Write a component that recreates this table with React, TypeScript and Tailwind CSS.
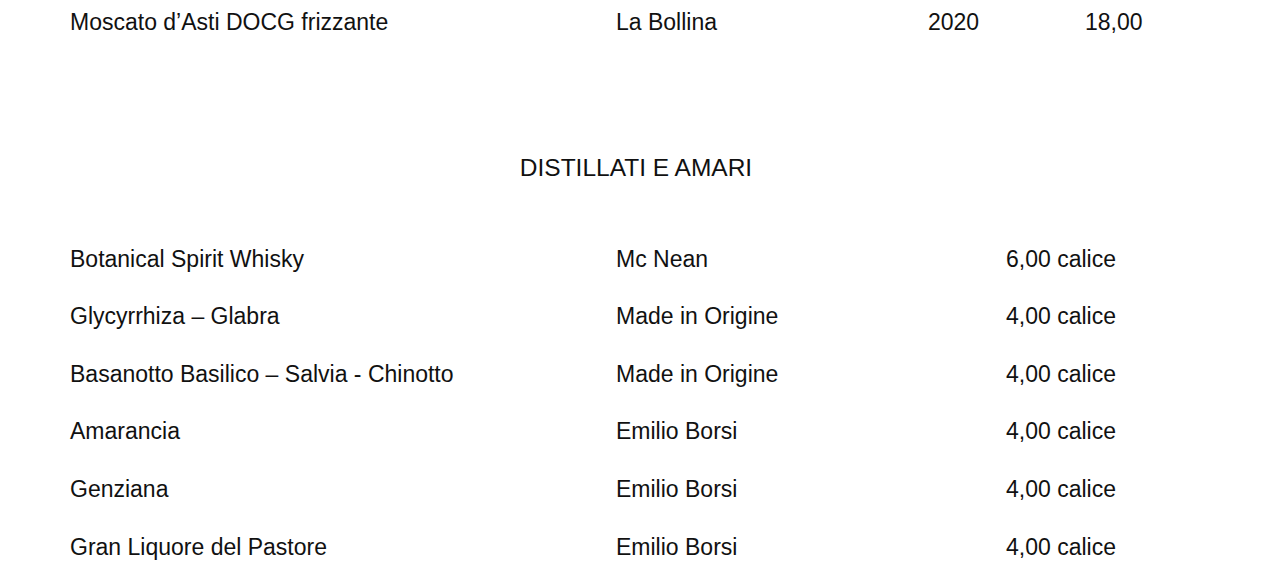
const distillati = [
  { name: "Botanical Spirit Whisky", producer: "Mc Nean", price: "6,00 calice" },
  { name: "Glycyrrhiza – Glabra", producer: "Made in Origine", price: "4,00 calice" },
  { name: "Basanotto Basilico – Salvia - Chinotto", producer: "Made in Origine", price: "4,00 calice" },
  { name: "Amarancia", producer: "Emilio Borsi", price: "4,00 calice" },
  { name: "Genziana", producer: "Emilio Borsi", price: "4,00 calice" },
  { name: "Gran Liquore del Pastore", producer: "Emilio Borsi", price: "4,00 calice" },
];

export default function App() {
  return (
    <main className="h-[585px] overflow-hidden bg-white pl-[70px] font-['Liberation_Sans',Arial,sans-serif] text-[23px] text-[#111]">
      <div className="grid h-[44px] grid-cols-[546px_312px_157px_auto] items-center">
        <span>Moscato d’Asti DOCG frizzante</span>
        <span>La Bollina</span>
        <span>2020</span>
        <span>18,00</span>
      </div>

      <h2 className="mt-[102px] flex h-[44px] items-center justify-center pr-[70px] text-[24.5px] font-normal">
        DISTILLATI E AMARI
      </h2>

      <section className="mt-[40px]">
        {distillati.map((item) => (
          <div className="grid h-[57.6px] grid-cols-[546px_390px_auto] items-center" key={item.name}>
            <span>{item.name}</span>
            <span>{item.producer}</span>
            <span>{item.price}</span>
          </div>
        ))}
      </section>
    </main>
  );
}
